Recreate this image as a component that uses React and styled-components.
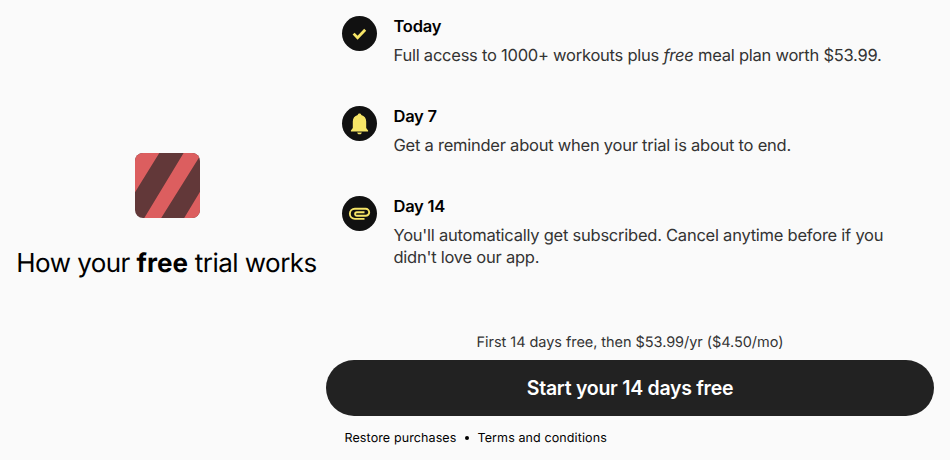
import React from "react";
import styled, { createGlobalStyle } from "styled-components";

const Global = createGlobalStyle`
  *{box-sizing:border-box}
  body{margin:0;background:#fafafa;color:#000;font-family:Inter,sans-serif;-webkit-font-smoothing:antialiased;text-rendering:geometricPrecision;}
  p,h1,h2{margin:0}
`;
const Page = styled.main`display:flex;width:950px;height:460px;overflow:hidden;`;
const Intro = styled.section`width:326px;flex:none;display:flex;flex-direction:column;align-items:center;padding:153px 0 0 9px;`;
const Logo = styled.svg`width:65px;height:65px;display:block;`;
const Title = styled.h1`margin:28px 2px 0 0;font-size:26px;line-height:36px;font-weight:400;letter-spacing:-0.54px;white-space:nowrap;b{font-weight:700;letter-spacing:0.05px}`;
const Panel = styled.section`width:608px;flex:none;`;
const Steps = styled.div`height:333px;padding:16px 16px 0;`;
const Step = styled.article`display:flex;gap:16.5px;height:90px;`;
const Disc = styled.div`width:35px;height:35px;border-radius:50%;background:#111;color:#f6e567;flex:none;svg{display:block;width:35px;height:35px}`;
const StepTitle = styled.h2`font-size:16.5px;line-height:21px;font-weight:600;letter-spacing:-0.25px;`;
const StepText = styled.p`margin-top:7px;font-size:16.5px;line-height:22px;letter-spacing:-0.24px;color:#333;white-space:nowrap;`;
const Price = styled.p`text-align:center;font-size:14.5px;line-height:20px;letter-spacing:-0.05px;color:#333;`;
const Cta = styled.button`display:block;width:608px;height:56px;margin-top:7px;padding:0;border:0;border-radius:28px;background:#222;color:#fff;font:600 19.5px/24px Inter,sans-serif;letter-spacing:-0.27px;`;
const Footer = styled.footer`display:flex;align-items:center;margin:14px 0 0 18.5px;font-size:12.5px;line-height:18px;letter-spacing:0.11px;`;
const Dot = styled.i`width:4px;height:4px;border-radius:50%;background:#000;margin:0 8.5px 2px;`;

const Check = () => <svg viewBox="0 0 35 35"><path d="M11.6 17.6L15.6 21.8L23.2 13.8" fill="none" stroke="currentColor" strokeWidth="2.8"/></svg>;
const Bell = () => <svg viewBox="0 0 35 35" fill="currentColor"><path d="M17.5 7.4c1 0 1.7.7 1.8 1.6 3.1.8 4.9 3.2 4.9 6.5v6.6l1.9 2.3v1.2H8.9v-1.2l1.9-2.3v-6.6c0-3.3 1.8-5.7 4.9-6.5.1-.9.8-1.6 1.8-1.6ZM15.2 26.4h4.6c-.2 1.2-1.1 1.9-2.3 1.9s-2.1-.7-2.3-1.9Z"/></svg>;
const Clip = () => <svg viewBox="0 0 35 35"><path d="M22.5 22.9H12.9a5 5 0 0 1 0-10.1H23.7a3.5 3.5 0 0 1 0 7H14.9a1.8 1.8 0 0 1 0-3.6H22.5" fill="none" stroke="currentColor" strokeWidth="1.9"/></svg>;

export default function App(){
  return <><Global/><Page>
    <Intro>
      <Logo viewBox="0 0 65 65"><defs><clipPath id="r"><rect width="65" height="65" rx="8"/></clipPath></defs>
        <g clipPath="url(#r)"><rect width="65" height="65" fill="#623839"/><path d="M0 0H24.3L0 39.3ZM48.6 0H65V3L26.2 65H9.3ZM65 38.7V65H49.2Z" fill="#dc5e5f"/></g></Logo>
      <Title>How your <b>free</b> trial works</Title>
    </Intro>
    <Panel>
      <Steps>
        <Step><Disc><Check/></Disc><div><StepTitle>Today</StepTitle><StepText>Full access to 1000+ workouts plus <em>free</em> meal plan worth $53.99.</StepText></div></Step>
        <Step><Disc><Bell/></Disc><div><StepTitle>Day 7</StepTitle><StepText>Get a reminder about when your trial is about to end.</StepText></div></Step>
        <Step><Disc><Clip/></Disc><div><StepTitle>Day 14</StepTitle><StepText>You'll automatically get subscribed. Cancel anytime before if you<br/>didn't love our app.</StepText></div></Step>
      </Steps>
      <Price>First 14 days free, then $53.99/yr ($4.50/mo)</Price>
      <Cta>Start your 14 days free</Cta>
      <Footer><span>Restore purchases</span><Dot/><span>Terms and conditions</span></Footer>
    </Panel>
  </Page></>;
}
